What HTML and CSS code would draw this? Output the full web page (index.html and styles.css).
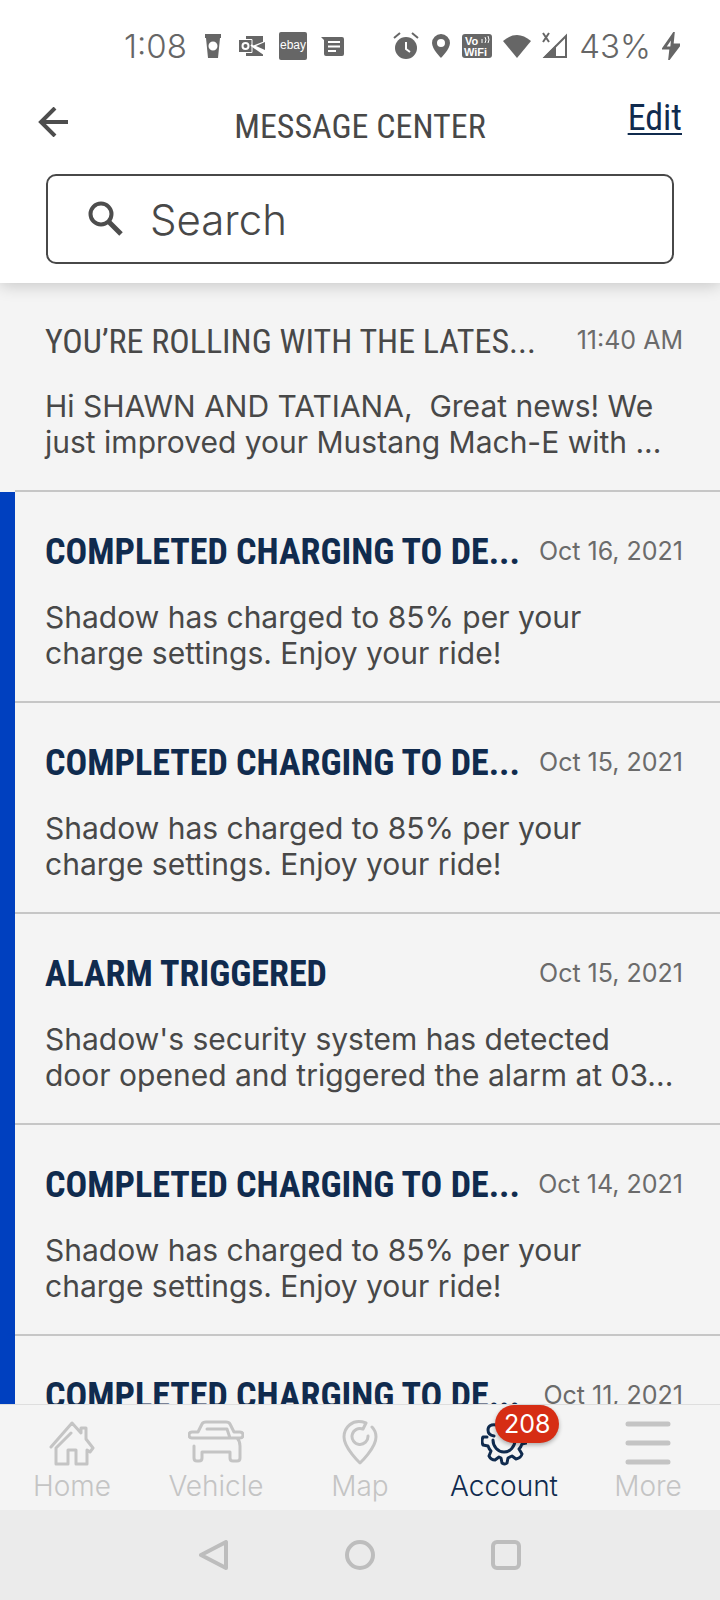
FILE: index.html
```html
<!DOCTYPE html>
<html lang="en">
<head>
  <meta charset="UTF-8">
  <meta name="viewport" content="width=device-width, initial-scale=1.0">
  <title>Message Center</title>
  <link rel="stylesheet" href="styles.css">
</head>
<body>
  <div class="status-bar">
    <div class="status-group">
      <span class="status-text">1:08</span>
      <svg width="24" height="28" viewBox="0 0 24 28" fill="#666"><path fill-rule="evenodd" d="M4 2h16v4h-1l-2 20H7L5 6H4zM12 9.500a4.500 4.500 0 1 0 0 9 4.500 4.500 0 1 0 0-9z"/></svg>
      <svg width="26" height="28" viewBox="0 0 26 28"><path fill="#666" d="M7 4h17v20H7zM0 8h13v12H0z"/><path d="M13 14l13-5v13z" fill="#fff"/><path d="M17 14l9-4v8z" fill="#666"/><path d="M12 13l13 9" stroke="#fff" stroke-width="2"/><path d="M7 7.500h6v13H7" fill="none" stroke="#fff"/><circle cx="6.500" cy="14" r="3" fill="none" stroke="#fff" stroke-width="2"/></svg>
      <svg width="28" height="28" viewBox="0 0 28 28"><rect width="28" height="28" rx="2" fill="#666"/><text x="14" y="17" class="ebay-text">ebay</text></svg>
      <svg width="24" height="28" viewBox="0 0 24 28"><path fill="#666" d="M0 5h21q2 0 2 2v15q0 2-2 2H5q-2 0-2-2V8z"/><path d="M7 10h12M7 14.500h12M7 19h8" stroke="#fff" stroke-width="2"/></svg>
    </div>
    <div class="status-group status-right">
      <svg width="28" height="28" viewBox="0 0 28 28"><circle cx="14" cy="16" r="11" fill="#666"/><path d="M2 6l6-5M26 6l-6-5" stroke="#666" stroke-width="2"/><path d="M14 10v7l4 3" fill="none" stroke="#fff" stroke-width="2"/></svg>
      <svg width="20" height="28" viewBox="0 0 20 28"><path fill="#666" fill-rule="evenodd" d="M10 2a9 9 0 0 1 9 9c0 6-9 15-9 15S1 17 1 11a9 9 0 0 1 9-9zm0 5a4 4 0 1 0 0 8 4 4 0 1 0 0-8z"/></svg>
      <svg width="30" height="28" viewBox="0 0 30 28"><rect y="2" width="30" height="24" rx="3" fill="#666"/><text x="3" y="13" class="vowifi-text">Vo</text><text x="2" y="24" class="vowifi-text">WiFi</text><path d="M20 7v4M23 5q2 3 0 6M26 4q2 4 0 7" fill="none" stroke="#fff"/></svg>
      <svg width="28" height="28" viewBox="0 0 28 28"><path fill="#666" d="M0 9Q14-3 28 9L14 26z"/></svg>
      <svg width="26" height="28" viewBox="0 0 26 28"><path d="M1 1l6 9M7 1l-6 9" stroke="#666" stroke-width="2"/><path d="M3 25L24 4v21z" fill="none" stroke="#666" stroke-width="2"/><path d="M1 26L14 13v13z" fill="#666"/></svg>
      <span class="status-text">43%</span>
      <svg width="18" height="28" viewBox="0 0 18 28"><path d="M11 3L2 16h7l-1 9 9-12h-7z" fill="none" stroke="#666" stroke-width="3"/><path d="M9 14h7l-8 11z" fill="#666"/></svg>
    </div>
  </div>

  <header class="header">
    <div class="title-row">
      <button type="button" class="back" aria-label="Back">
        <svg width="30" height="30" viewBox="0 0 30 30" fill="none" stroke="#4d4d4d" stroke-width="4"><path d="M17 1L3 15l14 14M3 15h27"/></svg>
      </button>
      <h1>MESSAGE CENTER</h1>
      <a href="#" class="edit">Edit</a>
    </div>
    <label class="search">
      <svg width="36" height="36" viewBox="0 0 36 36" fill="none" stroke="#4d4d4d"><circle cx="13" cy="13" r="10.500" stroke-width="4"/><path d="M21 21l12 12" stroke-width="5"/></svg>
      <input type="search" placeholder="Search" aria-label="Search">
    </label>
  </header>

  <main class="messages">
    <article class="message">
      <div class="message-head">
        <h2>YOU’RE ROLLING WITH THE LATES...</h2>
        <time>11:40 AM</time>
      </div>
      <p>Hi SHAWN AND TATIANA,&nbsp; Great news! We<br>just improved your Mustang Mach-E with ...</p>
    </article>
    <article class="message unread">
      <div class="message-head">
        <h2>COMPLETED CHARGING TO DE...</h2>
        <time>Oct 16, 2021</time>
      </div>
      <p>Shadow has charged to 85% per your<br>charge settings. Enjoy your ride!</p>
    </article>
    <article class="message unread">
      <div class="message-head">
        <h2>COMPLETED CHARGING TO DE...</h2>
        <time>Oct 15, 2021</time>
      </div>
      <p>Shadow has charged to 85% per your<br>charge settings. Enjoy your ride!</p>
    </article>
    <article class="message unread">
      <div class="message-head">
        <h2>ALARM TRIGGERED</h2>
        <time>Oct 15, 2021</time>
      </div>
      <p>Shadow's security system has detected<br>door opened and triggered the alarm at 03...</p>
    </article>
    <article class="message unread">
      <div class="message-head">
        <h2>COMPLETED CHARGING TO DE...</h2>
        <time>Oct 14, 2021</time>
      </div>
      <p>Shadow has charged to 85% per your<br>charge settings. Enjoy your ride!</p>
    </article>
    <article class="message unread">
      <div class="message-head">
        <h2>COMPLETED CHARGING TO DE...</h2>
        <time>Oct 11, 2021</time>
      </div>
    </article>
  </main>

  <nav class="tabs">
    <a href="#" class="tab">
      <svg width="46" height="46" viewBox="0 0 46 46"><path d="M2 27L23 3l9 10V8h5v11l7 9-3 4-3-2v14H27V30h-8v14H7V28L22 13"/></svg>
      <span>Home</span>
    </a>
    <a href="#" class="tab">
      <svg width="56" height="46" viewBox="0 0 56 46"><path d="M19 9h20l3 9M49 18H4q-3 0-3-3t3-3h6l4-8q1-2 4-2h20q3 0 4 2l4 8h6q3 0 3 3t-3 3h-3q3 3 3 8v12q0 3-3 3h-4q-3 0-3-3v-6H14v6q0 3-3 3H9q-3 0-3-3V26"/></svg>
      <span>Vehicle</span>
    </a>
    <a href="#" class="tab">
      <svg width="36" height="46" viewBox="0 0 36 46"><path d="M24 3C10-2 2 8 2 17c0 11 16 26 16 26s16-15 16-26q0-6-4-10M24 3l-3 6a8 8 0 1 0 5 7"/></svg>
      <span>Map</span>
    </a>
    <a href="#" class="tab active">
      <span class="icon-wrap">
        <svg width="46" height="46" viewBox="0 0 46 46"><path d="M15 5q-8-1-8 5 0 5 6 6M6 17H2q-2 4 0 8l5 1q1 3 3 5l-2 5q2 4 6 4l4-3 2 1 1 5q3 2 5 0l1-5 4-2 4 3q5-1 6-5l-3-5q2-2 3-5l4-1q2-4 0-8h-4M12 20a11 12 0 0 0 22 0"/></svg>
        <span class="badge">208</span>
      </span>
      <span>Account</span>
    </a>
    <a href="#" class="tab">
      <svg width="46" height="46" viewBox="0 0 46 46" class="menu-icon"><path d="M3 4h40M3 23h40M3 42h40"/></svg>
      <span>More</span>
    </a>
  </nav>

  <div class="system-nav">
    <button type="button" aria-label="Back"><svg width="30" height="30" viewBox="0 0 30 30"><path d="M27 2v26L2 15z"/></svg></button>
    <button type="button" aria-label="Home"><svg width="30" height="30" viewBox="0 0 30 30"><circle cx="15" cy="15" r="13"/></svg></button>
    <button type="button" aria-label="Recent apps"><svg width="30" height="30" viewBox="0 0 30 30"><rect x="2" y="2" width="26" height="26" rx="4"/></svg></button>
  </div>
</body>
</html>
```

FILE: styles.css
```css
* {
  box-sizing: border-box;
}
body {
  margin: 0;
  height: 100vh;
  display: flex;
  flex-direction: column;
  overflow: hidden;
  background-color: #f4f4f4;
  color: #484848;
  font-family: Inter, "Liberation Sans", sans-serif;
}
svg {
  display: block;
  flex: none;
}
button {
  padding: 0;
  border: none;
  background: none;
  cursor: pointer;
}

.status-bar {
  position: relative;
  z-index: 2;
  display: flex;
  justify-content: space-between;
  padding: 26px 40px 0 124px;
  height: 90px;
  background-color: #fff;
  color: #666;
}
.status-group {
  display: flex;
  align-items: center;
  gap: 14px;
  height: 40px;
}
.status-right {
  gap: 11px;
}
.status-text {
  font-size: 33px;
  font-weight: 300;
}
.ebay-text {
  font: 12px "Liberation Sans", sans-serif;
  fill: #fff;
  text-anchor: middle;
}
.vowifi-text {
  font: bold 11px "Liberation Sans", sans-serif;
  fill: #fff;
}

.header {
  position: relative;
  z-index: 1;
  padding: 0 46px 19px;
  background-color: #fff;
  box-shadow: 0 2px 16px rgba(0, 0, 0, 0.2);
}
.title-row {
  display: grid;
  grid-template-columns: 1fr auto 1fr;
  align-items: start;
  height: 70px;
  margin: 0 -8px 14px;
}
h1, h2 {
  margin: 0;
  font-family: "Roboto Condensed", "Liberation Sans Narrow", sans-serif;
  font-size: 34px;
  line-height: 40px;
  font-weight: normal;
  white-space: nowrap;
}
h1 {
  padding-top: 16px;
}
.back {
  justify-self: start;
  padding-top: 17px;
}
.edit {
  justify-self: end;
  padding-top: 8px;
  font-family: "Roboto Condensed", "Liberation Sans Narrow", sans-serif;
  font-size: 36px;
  line-height: 40px;
  color: #102b4e;
  text-decoration-thickness: 2px;
  text-underline-offset: 3px;
}
.search {
  display: flex;
  align-items: center;
  gap: 26px;
  height: 90px;
  padding: 0 40px;
  border: 2px solid #484848;
  border-radius: 10px;
}
.search input {
  flex: 1;
  min-width: 0;
  padding: 0;
  border: none;
  outline: none;
  background: none;
  font-family: Inter, "Liberation Sans", sans-serif;
  font-size: 42px;
  font-weight: 300;
}
.search input::placeholder {
  color: #484848;
  opacity: 1;
}

.messages {
  flex: 1;
  min-height: 0;
  overflow: hidden;
}
.message {
  position: relative;
  height: 211px;
  padding: 40px 37px 0 45px;
}
.message::after {
  content: "";
  position: absolute;
  left: 15px;
  right: 0;
  bottom: 0;
  height: 2px;
  background-color: #c6c6c6;
}
.message:first-child {
  height: 209px;
  padding-top: 38px;
}
.unread::before {
  content: "";
  position: absolute;
  left: 0;
  top: 0;
  bottom: 0;
  width: 15px;
  background-color: #0040bf;
}
.message-head {
  display: flex;
  justify-content: space-between;
  height: 40px;
}
.unread h2 {
  font-size: 36px;
  font-weight: bold;
  color: #102b4e;
}
time {
  font-size: 25px;
  line-height: 38px;
  color: #6b6b6b;
  white-space: nowrap;
}
.message p {
  margin: 27px 0 0;
  font-size: 30px;
  line-height: 36px;
  white-space: nowrap;
}

.tabs {
  position: relative;
  z-index: 1;
  display: grid;
  grid-template-columns: repeat(5, 1fr);
  height: 106px;
  padding-top: 15px;
  border-top: 1px solid #dedede;
  background-color: #f4f4f4;
}
.tab {
  display: flex;
  flex-direction: column;
  align-items: center;
  gap: 2px;
  color: #c4c4c4;
  font-size: 28px;
  font-weight: 300;
  line-height: 36px;
  text-decoration: none;
}
.tab svg {
  fill: none;
  stroke: currentColor;
  stroke-width: 3;
  stroke-linejoin: round;
  stroke-linecap: round;
}
.tab .menu-icon {
  stroke-width: 5;
}
.active {
  color: #102b4e;
}
.icon-wrap {
  position: relative;
}
.badge {
  position: absolute;
  left: 14px;
  top: -15px;
  padding: 0 9px;
  border-radius: 19px;
  background-color: #d62d14;
  color: #fff;
  font-size: 25px;
  font-weight: normal;
  line-height: 38px;
  box-shadow: 0 2px 4px rgba(0, 0, 0, 0.3);
}

.system-nav {
  display: flex;
  justify-content: center;
  align-items: center;
  gap: 116px;
  height: 90px;
  background-color: #ebebeb;
}
.system-nav svg {
  fill: none;
  stroke: #bdbdbd;
  stroke-width: 4;
  stroke-linejoin: round;
}
```
